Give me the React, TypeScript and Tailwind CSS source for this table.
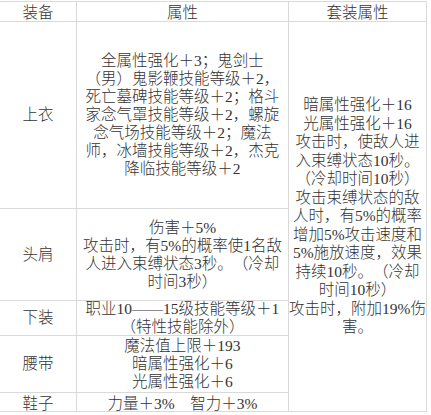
const line = 'border-[#d9d9d9]';

type Row = { name: string; lines: string[]; pad?: string };

const rows: Row[] = [
  {
    name: '上衣',
    lines: [
      '全属性强化＋3；鬼剑士',
      '（男）鬼影鞭技能等级＋2，',
      '死亡墓碑技能等级＋2；格斗',
      '家念气罩技能等级＋2，螺旋',
      '念气场技能等级＋2；魔法',
      '师，冰墙技能等级＋2，杰克',
      '降临技能等级＋2',
    ],
  },
  {
    name: '头肩',
    lines: ['伤害＋5%', '攻击时，有5%的概率使1名敌', '人进入束缚状态3秒。（冷却', '时间3秒）'],
  },
  { name: '下装', lines: ['职业10——15级技能等级＋1', '（特性技能除外）'] },
  { name: '腰带', lines: ['魔法值上限＋193', '暗属性强化＋6', '光属性强化＋6'] },
  { name: '鞋子', lines: ['力量＋3%　智力＋3%'], pad: 'pt-[3px]' },
];

const setLines = [
  '暗属性强化＋16',
  '光属性强化＋16',
  '攻击时，使敌人进',
  '入束缚状态10秒。',
  '（冷却时间10秒）',
  '攻击束缚状态的敌',
  '人时，有5%的概率',
  '增加5%攻击速度和',
  '5%施放速度，效果',
  '持续10秒。（冷却',
  '时间10秒）',
  '攻击时，附加19%伤',
  '害。',
];

function Cell({ children, className = '' }: { children: React.ReactNode; className?: string }) {
  return (
    <div className={`flex flex-col items-center justify-center overflow-hidden whitespace-nowrap border-r border-b text-center ${line} ${className}`}>
      {children}
    </div>
  );
}

export default function App() {
  return (
    <div className="h-[415px] w-[431px] overflow-hidden bg-white">
      <div className="mt-px grid w-[427px] grid-cols-[77px_212px_138px] grid-rows-[20px_187px_92px_35px_57px_19px] border-t border-[#d9d9d9] font-['Liberation_Serif','Noto_Sans_CJK_SC',serif] text-[15.5px] font-light leading-[18px] text-[#333] [text-spacing-trim:space-all]">
        <Cell className="pt-[3px]">装备</Cell>
        <Cell className="pt-[3px]">属性</Cell>
        <Cell className="pt-[3px]">套装属性</Cell>

        {rows.map((row, i) => (
          <>
            <Cell key={`n${i}`} className={row.pad}>{row.name}</Cell>
            <Cell key={`a${i}`} className={row.pad}>
              {row.lines.map((t) => (
                <span key={t} className="block">{t}</span>
              ))}
            </Cell>
            {i === 0 && (
              <Cell key="set" className="row-span-5 leading-[18.5px]">
                {setLines.map((t) => (
                  <span key={t} className="block">{t}</span>
                ))}
              </Cell>
            )}
          </>
        ))}
      </div>
    </div>
  );
}
